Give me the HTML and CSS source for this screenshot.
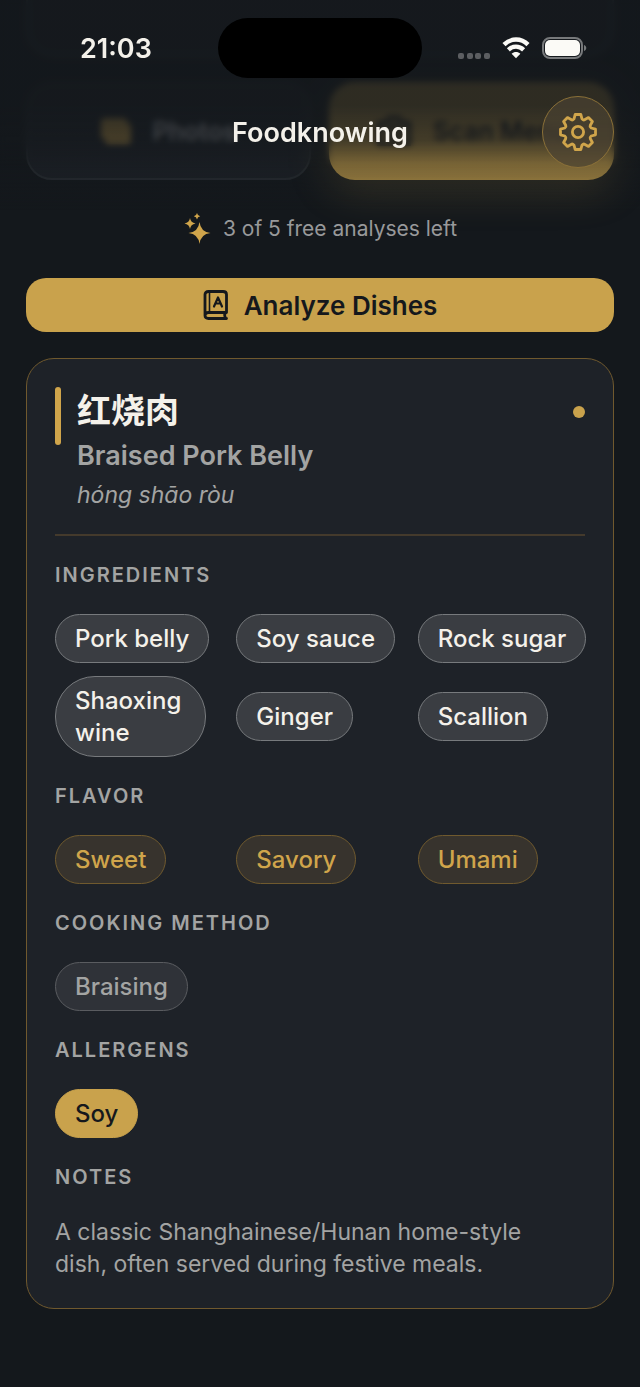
FILE: index.html
```html
<!DOCTYPE html>
<html lang="en">
<head>
    <meta charset="UTF-8">
    <meta name="viewport" content="width=device-width, initial-scale=1.0">
    <title>Foodknowing</title>
    <link rel="stylesheet" href="styles.css">
</head>
<body>
    <header class="header">
        <div class="status-bar">
            <span class="time">21:03</span>
            <div class="island"></div>
            <div class="status-icons">
                <svg class="dots" width="32" height="6" viewBox="0 0 32 6" fill="#5c5e61">
                    <rect width="6" height="6" rx="2"/>
                    <rect x="9" width="6" height="6" rx="2"/>
                    <rect x="17" width="6" height="6" rx="2"/>
                    <rect x="26" width="6" height="6" rx="2"/>
                </svg>
                <svg width="28" height="22" viewBox="0 0 28 22" fill="none" stroke="#fbfaf6" stroke-width="4.400">
                    <path d="M2 7.6C8.8 .8 19.2 .8 26 7.6"/>
                    <path d="M6.400 12.8C10.8 8.6 17.2 8.600 21.600 12.8"/>
                    <path d="M14 21.200L9.600 16.700C12.2 14.400 15.8 14.400 18.400 16.700Z" fill="#fbfaf6" stroke="none"/>
                </svg>
                <svg width="46" height="22" viewBox="0 0 46 22">
                    <rect x="1" y="1" width="39" height="20" rx="7" fill="none" stroke="#77797b" stroke-width="2"/>
                    <rect x="3" y="3" width="35" height="16" rx="5" fill="#fbfaf6"/>
                    <path d="M42 8c3 1 3 5 0 6z" fill="#77797b"/>
                </svg>
            </div>
        </div>
        <div class="nav-bar">
            <h1>Foodknowing</h1>
            <button class="settings-button" aria-label="Settings">
                <svg width="40" height="40" viewBox="-20 -20 40 40" fill="none" stroke="#d0a54b" stroke-width="2.8" stroke-linejoin="round">
                    <path d="M-4-13.2L-2.8-17.5H2.8L4-13.2Q5.4-11.6 6.5-12.2L10.5-14.4L14.4-10.5L12.2-6.5Q11.6-5.4 13.2-4L17.5-2.8V2.8L13.2 4Q11.6 5.4 12.2 6.5L14.4 10.5L10.5 14.4L6.5 12.2Q5.4 11.6 4 13.2L2.8 17.5H-2.8L-4 13.2Q-5.4 11.6-6.5 12.2L-10.5 14.4L-14.4 10.5L-12.2 6.5Q-11.6 5.4-13.2 4L-17.5 2.8V-2.8L-13.2-4Q-11.6-5.4-12.2-6.5L-14.4-10.5L-10.5-14.4L-6.5-12.2Q-5.4-11.6-4-13.2Z"/>
                    <circle r="5.6"/>
                </svg>
            </button>
        </div>
    </header>

    <main class="container">
        <!-- Bottom of the picked photo, scrolled under the header -->
        <div class="preview"></div>

        <div class="sources">
            <button class="source-button photos-button">
                <svg width="32" height="28" viewBox="0 0 32 28" fill="#d0a54b">
                    <rect x="1" y="1" width="26" height="21" rx="4"/>
                    <rect x="5" y="6" width="26" height="21" rx="4"/>
                </svg>
                Photos
            </button>
            <button class="source-button scan-button">
                <svg width="38" height="32" viewBox="0 0 38 32" fill="none" stroke="#15181c" stroke-width="4">
                    <path d="M4 8h7l3-5h10l3 5h7v21H4z"/>
                    <circle cx="19" cy="17" r="6"/>
                </svg>
                Scan Menu
            </button>
        </div>

        <p class="quota">
            <svg width="28" height="32" viewBox="0 0 28 32" fill="#d0a54b">
                <path d="M16.500 9Q17.700 19 27.500 20Q17.700 21 16.500 31Q15.300 21 5.500 20Q15.300 19 16.500 9Z"/>
                <path d="M7 5Q7.700 9.700 12.500 10.500Q7.700 11.300 7 16Q6.300 11.300 1.500 10.500Q6.300 9.700 7 5Z"/>
                <path d="M14 0Q14.500 2.800 17.200 3.200Q14.500 3.600 14 6.500Q13.500 3.600 10.800 3.200Q13.500 2.800 14 0Z"/>
            </svg>
            3 of 5 free analyses left
        </p>

        <button class="analyze-button">
            <svg width="26" height="32" viewBox="0 0 26 32" fill="none" stroke="#15181c" stroke-width="2.800" stroke-linecap="round" stroke-linejoin="round">
                <path d="M23.500 29.500H5.500Q2 29.500 2 26.500V5.500Q2 2.500 5.500 2.500H20Q23.500 2.500 23.500 5.500V23.500H5.500Q2 23.500 2 26.500M22 23.500Q21 27 23 29.500"/>
                <path d="M6.500 3V23" stroke-width="1.600"/>
                <path d="M11 17.500L15 8.500L19 17.500M12.400 14.500H17.600" stroke-width="2.200"/>
            </svg>
            Analyze Dishes
        </button>

        <article class="dish-card">
            <div class="dish-head">
                <span class="accent"></span>
                <div class="dish-names">
                    <h2 lang="zh-CN">红烧肉</h2>
                    <p class="english">Braised Pork Belly</p>
                    <p class="pinyin">hóng shāo ròu</p>
                </div>
                <span class="dot"></span>
            </div>

            <section>
                <h3>INGREDIENTS</h3>
                <ul class="chips">
                    <li class="chip">Pork belly</li>
                    <li class="chip">Soy sauce</li>
                    <li class="chip">Rock sugar</li>
                    <li class="chip wrap">Shaoxing wine</li>
                    <li class="chip">Ginger</li>
                    <li class="chip">Scallion</li>
                </ul>
            </section>
            <section>
                <h3>FLAVOR</h3>
                <ul class="chips">
                    <li class="chip flavor">Sweet</li>
                    <li class="chip flavor">Savory</li>
                    <li class="chip flavor">Umami</li>
                </ul>
            </section>
            <section>
                <h3>COOKING METHOD</h3>
                <ul class="chips">
                    <li class="chip method">Braising</li>
                </ul>
            </section>
            <section>
                <h3>ALLERGENS</h3>
                <ul class="chips">
                    <li class="chip allergen">Soy</li>
                </ul>
            </section>
            <section>
                <h3>NOTES</h3>
                <p class="notes">A classic Shanghainese/Hunan home-style dish, often served during festive meals.</p>
            </section>
        </article>
    </main>
</body>
</html>
```
FILE: styles.css
```css
* {
    box-sizing: border-box;
}

body {
    margin: 0;
    min-height: 100vh;
    background-color: #14181c;
    color: #f4f1ea;
    font-family: Inter, "Noto Sans CJK SC", sans-serif;
}

h1, h2, h3, p, ul {
    margin: 0;
    padding: 0;
}

button {
    font-family: inherit;
    cursor: pointer;
}

svg {
    flex-shrink: 0;
}

/* Header, floats over the scrolled content */
.header {
    position: fixed;
    top: 0;
    left: 0;
    right: 0;
    z-index: 1;
    height: 210px;
}

.header::before, .header::after {
    content: "";
    position: absolute;
    inset: 0;
    z-index: -1;
}

.header::before {
    backdrop-filter: blur(3px);
    mask-image: linear-gradient(#000 68%, transparent 80%);
}

.header::after {
    background: linear-gradient(rgba(20, 24, 28, 0.86) 50%, rgba(20, 24, 28, 0.74) 67%, rgba(20, 24, 28, 0.45) 78%, rgba(20, 24, 28, 0.38) 84%, rgba(20, 24, 28, 0));
}

.status-bar {
    display: grid;
    grid-template-columns: 1fr auto 1fr;
    align-items: center;
    padding-top: 18px;
}

.time {
    padding-left: 80px;
    font-size: 27px;
    font-weight: 600;
}

.island {
    width: 204px;
    height: 60px;
    border-radius: 30px;
    background: #000;
}

.status-icons {
    display: flex;
    justify-content: flex-end;
    align-items: center;
    gap: 12px;
    padding-right: 52px;
}

.dots {
    align-self: flex-end;
}

.nav-bar {
    display: grid;
    grid-template-columns: 1fr auto 1fr;
    align-items: center;
    padding: 18px 26px 0;
}

.nav-bar h1 {
    grid-column: 2;
    font-size: 27px;
    font-weight: 600;
}

.settings-button {
    display: flex;
    justify-content: center;
    align-items: center;
    justify-self: end;
    width: 72px;
    height: 72px;
    padding: 0;
    border: 1px solid #8a7038;
    border-radius: 50%;
    background: rgba(74, 65, 50, 0.7);
}

/* Page */
.container {
    padding: 0 26px 82px;
}

.preview {
    height: 57px;
    border: 2px solid #3a4047;
    border-top: none;
    border-radius: 0 0 28px 28px;
    background: #1e2228;
}

.sources {
    display: grid;
    grid-template-columns: 1fr 1fr;
    gap: 18px;
    margin-top: 25px;
}

.source-button {
    display: flex;
    justify-content: center;
    align-items: center;
    gap: 20px;
    height: 98px;
    border: none;
    border-radius: 26px;
    font-size: 25px;
    font-weight: 600;
}

.photos-button {
    border: 2px solid #2a2f34;
    background: #1e2228;
    color: #c8c8cc;
}

.scan-button {
    background: #c9a24c;
    color: #15181c;
    box-shadow: 0 8px 40px rgba(201, 162, 76, 0.25);
}

.quota {
    display: flex;
    justify-content: center;
    align-items: center;
    gap: 12px;
    margin-top: 33px;
    color: #98999a;
    font-size: 21px;
    line-height: 32px;
}

.analyze-button {
    display: flex;
    justify-content: center;
    align-items: center;
    gap: 15px;
    width: 100%;
    height: 54px;
    margin: 33px 0 26px;
    border: none;
    border-radius: 20px;
    background: #c9a24c;
    color: #15181c;
    font-size: 26px;
    font-weight: 600;
}

/* Dish card */
.dish-card {
    padding: 28px;
    border: 1px solid #70592e;
    border-radius: 28px;
    background: #1e2228;
}

.dish-head {
    display: flex;
    align-items: flex-start;
    margin-bottom: 27px;
    padding-bottom: 21px;
    border-bottom: 2px solid #443a2c;
}

.accent {
    width: 6px;
    height: 58px;
    border-radius: 3px;
    background: #d0a54b;
}

.dish-names {
    flex: 1;
    padding-left: 16px;
}

.dish-names h2 {
    font-size: 34px;
    font-weight: 700;
    line-height: 48px;
}

.english {
    color: #a3a4a3;
    font-size: 27px;
    font-weight: 600;
    line-height: 42px;
}

.pinyin {
    color: #a3a4a3;
    font-size: 23px;
    font-style: italic;
    line-height: 36px;
}

.dot {
    width: 12px;
    height: 12px;
    margin-top: 19px;
    border-radius: 50%;
    background: #c9a24c;
}

section + section {
    margin-top: 27px;
}

h3 {
    margin-bottom: 26px;
    color: #a3a4a3;
    font-size: 20px;
    font-weight: 600;
    line-height: 25px;
    letter-spacing: 2px;
}

.chips {
    display: grid;
    grid-template-columns: repeat(3, minmax(0, 1fr));
    align-items: center;
    justify-items: start;
    gap: 13px 14px;
    list-style: none;
}

.chip {
    padding: 8px 19px 7px;
    border: 1px solid #777a7d;
    border-radius: 40px;
    background: #3a3d42;
    font-size: 24px;
    font-weight: 500;
    line-height: 32px;
    white-space: nowrap;
}

.wrap {
    max-width: 151px;
    white-space: normal;
}

.flavor {
    border-color: #705a2e;
    background: #37332d;
    color: #d0a54b;
}

.method {
    border-color: #5a5c60;
    background: #2f3238;
    color: #a3a4a3;
}

.allergen {
    border-color: #c9a24c;
    background: #c9a24c;
    color: #15181c;
}

.notes {
    padding-right: 20px;
    color: #a3a4a3;
    font-size: 23px;
    line-height: 32px;
}
```
